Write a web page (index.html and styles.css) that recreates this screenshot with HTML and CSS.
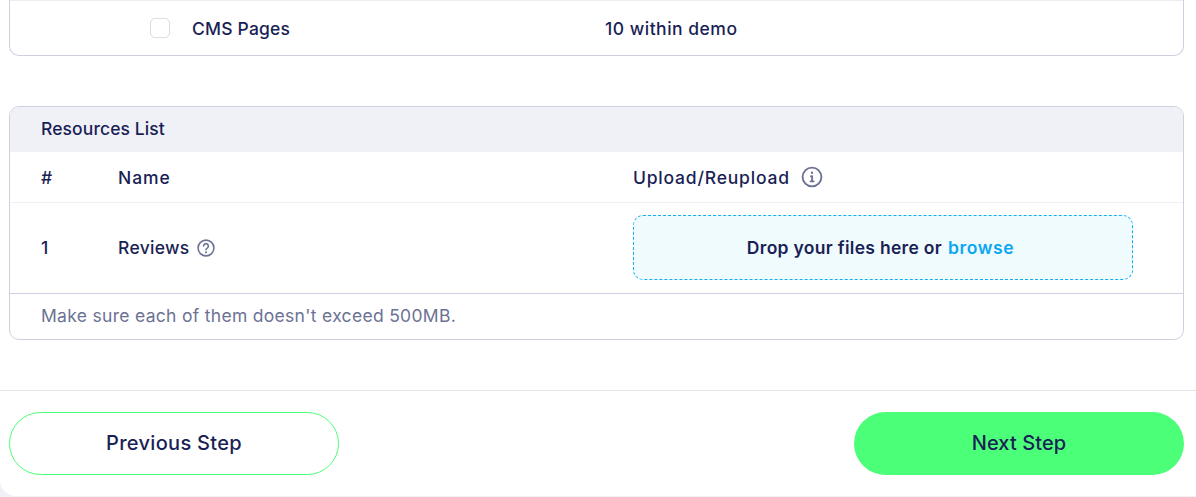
FILE: index.html
```html
<!DOCTYPE html>
<html lang="en">

<head>
    <meta charset="UTF-8">
    <meta name="viewport" content="width=device-width, initial-scale=1.0">
    <title>Resources</title>

    <link rel="stylesheet" href="styles.css">
</head>

<body>
    <div class="page">
        <div class="content">
            <div class="card card-top">
                <div class="page-row">
                    <span class="checkbox"></span>
                    <span class="page-name">CMS Pages</span>
                    <span class="page-limit">10 within demo</span>
                </div>
            </div>

            <div class="card card-resources">
                <div class="card-title">Resources List</div>
                <div class="table-row table-head">
                    <div class="col-num">#</div>
                    <div class="col-name">Name</div>
                    <div class="col-upload">
                        Upload/Reupload
                        <svg class="icon-info" viewBox="0 0 22 22" fill="none" stroke="#6c7293" stroke-width="1.9" stroke-linecap="round" stroke-linejoin="round">
                            <circle cx="11" cy="11" r="9.4"></circle>
                            <path d="M10 10.2h1.1v5.2M9.6 15.4h3"></path>
                            <path d="M11 6.7v.2" stroke-width="2.2"></path>
                        </svg>
                    </div>
                </div>
                <div class="table-row table-body">
                    <div class="col-num">1</div>
                    <div class="col-name">
                        <span class="review-name">Reviews</span>
                        <svg class="icon-help" viewBox="0 0 18 18" fill="none" stroke="#6c7293" stroke-width="1.6" stroke-linecap="round" stroke-linejoin="round">
                            <circle cx="9" cy="9" r="7.9"></circle>
                            <path d="M6.6 7a2.4 2.4 0 1 1 3.6 2.1c-.8.4-1.2.9-1.2 1.7"></path>
                            <path d="M9 13.3v.1" stroke-width="1.9"></path>
                        </svg>
                    </div>
                    <div class="col-upload">
                        <div class="dropzone">Drop your files here or <span class="browse">browse</span></div>
                    </div>
                </div>
                <div class="card-note">Make sure each of them doesn't exceed 500MB.</div>
            </div>
        </div>

        <div class="actions">
            <button class="btn btn-outline" type="button">Previous Step</button>
            <button class="btn btn-primary" type="button">Next Step</button>
        </div>
    </div>
</body>

</html>
```

FILE: styles.css
```css
/* Global reset */

* {
    margin: 0;
    padding: 0;
    box-sizing: border-box;
}

html,
body {
    height: 100%;
    overflow: hidden;
}

body {
    font-family: Inter, 'Open Sans', sans-serif;
    background-color: #f0f1f7;
    color: #1a1f56;
    font-size: 17.5px;
    font-weight: 500;
}

.page {
    background-color: white;
    height: 496px;
    border-radius: 0 0 0 16px;
}

.content {
    padding: 0 12px 50px 9px;
    border-bottom: 1px solid #e3e3ea;
}

.card {
    background-color: white;
    border: 1px solid #cfcfe2;
    border-radius: 10px;
}

.card-top {
    border-top: none;
    border-radius: 0 0 10px 10px;
}

.page-row {
    display: flex;
    align-items: center;
    height: 55px;
    padding-left: 140px;
    border-top: 1px solid #ececf2;
}

.checkbox {
    width: 20px;
    height: 20px;
    border: 1px solid #dcdce2;
    border-radius: 5px;
}

.page-name {
    width: 413px;
    margin-left: 22px;
    letter-spacing: 0.2px;
}

.page-limit {
    letter-spacing: 0.5px;
}

.card-resources {
    margin-top: 50px;
    overflow: hidden;
}

.card-title {
    display: flex;
    align-items: center;
    height: 45px;
    padding: 0 0 2px 31px;
    background-color: #f0f1f7;
    letter-spacing: 0.1px;
}

.table-row {
    display: flex;
    align-items: center;
    padding-left: 30px;
}

.table-head {
    height: 51px;
    border-bottom: 1px solid #f0f0f4;
}

.table-body {
    height: 91px;
    padding-bottom: 1px;
    border-bottom: 1px solid #cfcfe2;
}

.col-num {
    width: 78px;
    padding-left: 1px;
}

.col-name {
    display: flex;
    align-items: center;
    width: 515px;
}

.table-head .col-name {
    letter-spacing: 0.9px;
}

.review-name {
    letter-spacing: 0.3px;
}

.col-upload {
    display: flex;
    align-items: center;
}

.table-head .col-upload {
    letter-spacing: 0.8px;
}

.icon-info {
    width: 22px;
    height: 22px;
    margin-left: 11px;
}

.icon-help {
    width: 18px;
    height: 18px;
    margin-left: 7px;
}

.dropzone {
    display: flex;
    justify-content: center;
    align-items: center;
    gap: 6px;
    width: 500px;
    height: 65px;
    padding-right: 5px;
    background-color: #f0fbfe;
    border: 1px dashed #12aef5;
    border-radius: 10px;
    font-weight: 600;
    letter-spacing: 0.3px;
}

.browse {
    color: #0ba7f2;
    letter-spacing: 0.6px;
}

.card-note {
    display: flex;
    align-items: center;
    height: 45px;
    padding: 0 0 2px 31px;
    color: #6c7293;
    font-weight: 400;
    letter-spacing: 0.3px;
}

.actions {
    display: flex;
    justify-content: space-between;
    padding: 21px 12px 0 9px;
}

.btn {
    width: 330px;
    height: 63px;
    padding-bottom: 2px;
    border-radius: 32px;
    font-family: inherit;
    font-size: 20px;
    font-weight: 500;
    letter-spacing: 0.1px;
    color: #1a1f56;
    cursor: pointer;
}

.btn-outline {
    background-color: white;
    border: 1px solid #4bff79;
    letter-spacing: 0.3px;
}

.btn-primary {
    background-color: #4bff79;
    border: none;
}
```
